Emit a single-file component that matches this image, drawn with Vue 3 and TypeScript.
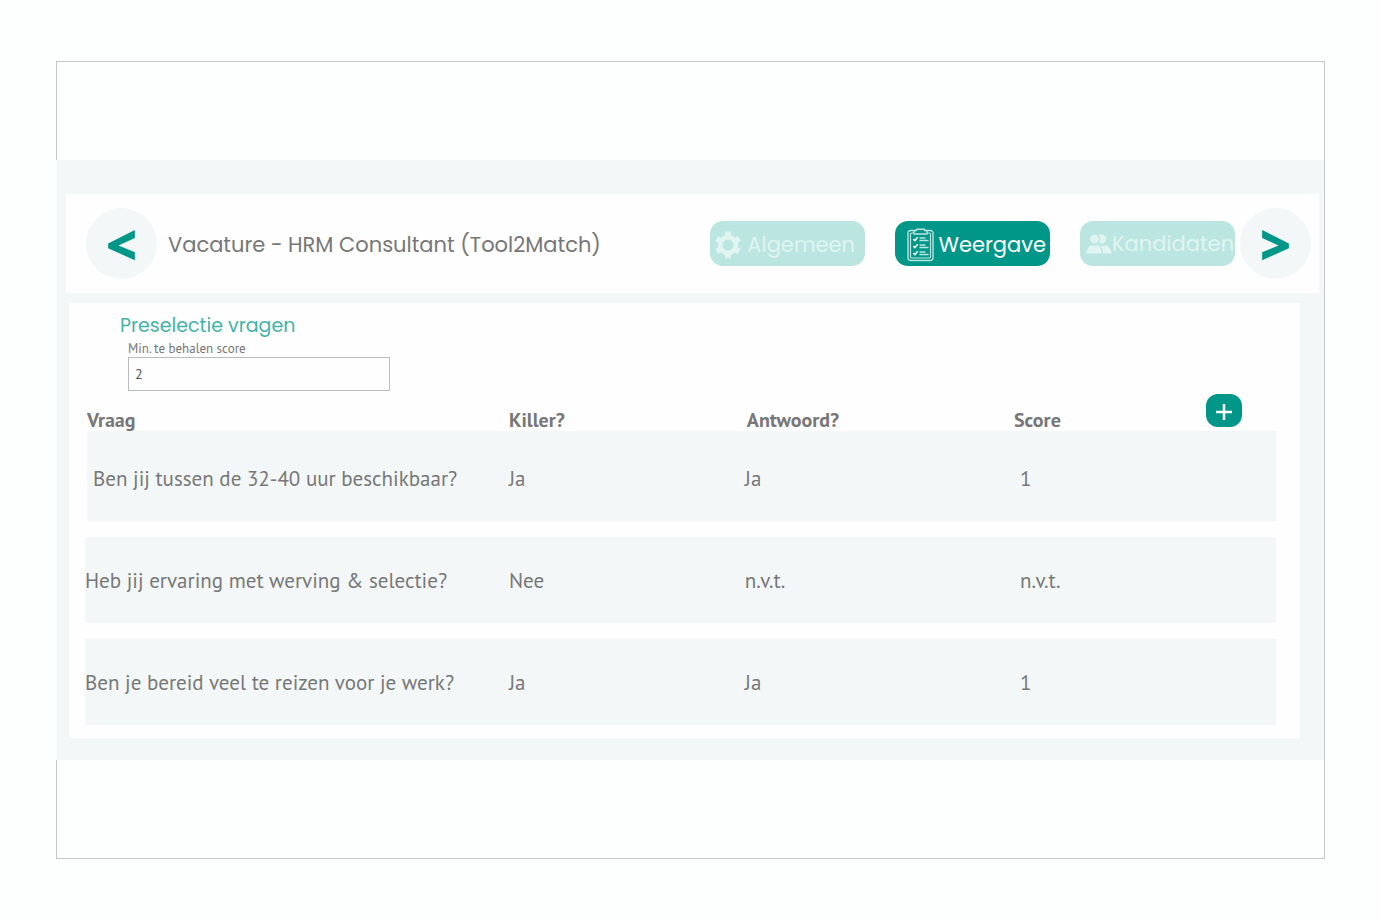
<script setup lang="ts">
import { ref } from 'vue'

type Tab = 'algemeen' | 'weergave' | 'kandidaten'

interface Question {
  text: string
  killer: string
  answer: string
  score: string
}

const activeTab = ref<Tab>('weergave')
const minScore = ref('2')

const questions = ref<Question[]>([
  { text: 'Ben jij tussen de 32-40 uur beschikbaar?', killer: 'Ja', answer: 'Ja', score: '1' },
  { text: 'Heb jij ervaring met werving & selectie?', killer: 'Nee', answer: 'n.v.t.', score: 'n.v.t.' },
  { text: 'Ben je bereid veel te reizen voor je werk?', killer: 'Ja', answer: 'Ja', score: '1' },
])
</script>

<template>
  <div class="page">
    <div class="frame">
      <main class="shell">
        <header class="bar">
          <button class="nav" type="button" aria-label="Vorige">&lt;</button>
          <h1 class="title">Vacature - HRM Consultant (Tool2Match)</h1>
          <nav class="tabs">
            <button class="tab" type="button" :class="{ active: activeTab === 'algemeen' }" @click="activeTab = 'algemeen'">
              <svg class="gear" viewBox="0 0 26 28" width="26" height="28" aria-hidden="true">
                <g fill="none" stroke="currentColor">
                  <circle cx="13" cy="14" r="7.9" stroke-width="4.8" />
                  <path d="M13 4.5V.6M13 23.5v3.900M4.800 9.300 1.700 7.500M21.200 9.300l3.100-1.800M4.800 18.700l-3.100 1.800M21.200 18.700l3.100 1.800" stroke-width="6" />
                </g>
              </svg>
              <span>Algemeen</span>
            </button>
            <button class="tab" type="button" :class="{ active: activeTab === 'weergave' }" @click="activeTab = 'weergave'">
              <svg class="clipboard" viewBox="0 0 27 34" width="27" height="34" aria-hidden="true">
                <g fill="none" stroke="#b9e4df" stroke-linecap="round" stroke-linejoin="round">
                  <path d="M7 2.500H3.500A2.500 2.500 0 0 0 1 5v25a2.500 2.500 0 0 0 2.500 2.500h20A2.500 2.500 0 0 0 26 30V5a2.500 2.500 0 0 0-2.500-2.500H20" stroke-width="1.4" />
                  <path d="M6.500 5H4.800a1.300 1.300 0 0 0-1.300 1.300v22.400A1.300 1.300 0 0 0 4.800 30h17.400a1.300 1.300 0 0 0 1.300-1.300V6.300A1.300 1.300 0 0 0 22.200 5h-1.700" stroke-width="1.2" />
                  <path d="M7 2.500h2.500V1.200h8v1.300H20V6H7z" stroke-width="1.4" />
                </g>
                <g fill="none" stroke="currentColor" stroke-linecap="round" stroke-linejoin="round">
                  <path d="m6.700 11.500 1.200 1.200 2.300-3M6.700 18.500l1.200 1.200 2.300-3M6.700 25.500l1.200 1.200 2.300-3" stroke-width="1.5" />
                  <path d="M13 10h5M13 12.500h8M13 17h5M13 19.500h8M13 24h5M13 26.500h8" stroke="#b9e4df" stroke-width="1.4" />
                </g>
              </svg>
              <span>Weergave</span>
            </button>
            <button class="tab" type="button" :class="{ active: activeTab === 'kandidaten' }" @click="activeTab = 'kandidaten'">
              <svg class="people" viewBox="0 0 26 20" width="26" height="20" aria-hidden="true">
                <g fill="currentColor">
                  <circle cx="8.5" cy="5" r="4.400" />
                  <path d="M13 1.400a4.500 4.500 0 1 1 0 7.200 6 6 0 0 0 0-7.200z" />
                  <path d="M0 19.500c.5-3 2.500-6.800 5-8.500q3.500 1.800 7 0c2.300 1.500 3.500 5 3.700 8.500z" />
                  <path d="M14 11.500q3.500 1.200 6.500-.5c2.700 1.700 4.700 5.500 5.200 8.500h-8.700c-.2-3.200-1.200-6-3-8z" />
                </g>
              </svg>
              <span>Kandidaten</span>
            </button>
          </nav>
          <button class="nav" type="button" aria-label="Volgende">&gt;</button>
        </header>

        <section class="panel">
          <h2 class="heading">Preselectie vragen</h2>
          <div class="field">
            <label for="min-score">Min. te behalen score</label>
            <input id="min-score" v-model="minScore" type="text" inputmode="numeric" />
          </div>

          <table class="questions">
            <colgroup>
              <col class="c-question" />
              <col class="c-killer" />
              <col class="c-answer" />
              <col class="c-score" />
              <col class="c-add" />
            </colgroup>
            <thead>
              <tr>
                <th scope="col">Vraag</th>
                <th scope="col">Killer?</th>
                <th scope="col">Antwoord?</th>
                <th scope="col">Score</th>
                <td>
                  <button class="add" type="button" aria-label="Vraag toevoegen">
                    <svg viewBox="0 0 16 16" width="16" height="16" aria-hidden="true">
                      <path d="M8 0v16M0 8h16" fill="none" stroke="currentColor" stroke-width="2.5" />
                    </svg>
                  </button>
                </td>
              </tr>
            </thead>
            <tbody>
              <tr v-for="question in questions" :key="question.text">
                <td>{{ question.text }}</td>
                <td>{{ question.killer }}</td>
                <td>{{ question.answer }}</td>
                <td colspan="2">{{ question.score }}</td>
              </tr>
            </tbody>
          </table>
        </section>
      </main>
    </div>
  </div>
</template>

<style>
body {
  margin: 0;
  background: #fdfefe;
}
</style>

<style scoped>
.page {
  --teal: #009688;
  --mist: #f3f7f8;
  --ink: #777;
  --display: Poppins, Inter, sans-serif;
  --text: "PT Sans", "Noto Sans", sans-serif;
  box-sizing: border-box;
  min-height: 100vh;
  padding: 61px 55px 61px 56px;
  background: #fdfefe;
  color: var(--ink);
  font-family: var(--text);
}

.page * {
  box-sizing: border-box;
}

button {
  margin: 0;
  padding: 0;
  border: 0;
  font: inherit;
  cursor: pointer;
}

.frame {
  padding: 98px 0;
  border: 1px solid #c3c7c7;
}

.shell {
  margin-left: -1px;
  padding: 34px 5px 22px 9px;
  border-left: 1px solid #fdfefe;
  background: var(--mist);
}

.bar {
  display: flex;
  align-items: center;
  min-height: 99px;
  padding: 0 8px 0 20px;
  background: #fefefe;
}

.nav {
  display: flex;
  flex: none;
  align-items: center;
  justify-content: center;
  width: 71px;
  height: 71px;
  border-radius: 50%;
  background: var(--mist);
  color: var(--teal);
  font: 800 54px/70px "Open Sans", sans-serif;
}

.title {
  flex: 1;
  margin: 0 0 0 11px;
  padding-top: 2px;
  font: 400 21px/32px var(--display);
}

.tabs {
  display: flex;
  gap: 30px;
  margin-right: 5px;
}

.tab {
  display: flex;
  align-items: center;
  justify-content: space-between;
  width: 155px;
  height: 45px;
  padding: 2px 10px 0 5px;
  border-radius: 13px;
  background: #bbe5e0;
  color: #e0f4f1;
  font: 400 21px/32px var(--display);
  white-space: nowrap;
}

.tab:nth-child(2) {
  padding: 2px 4px 0 12px;
}

.tab:nth-child(3) {
  padding: 0 2px 0 6px;
}

.tab.active {
  background: var(--teal);
  color: #fff;
}

.tab svg {
  flex: none;
}

.panel {
  margin: 10px 19px 0 3px;
  padding: 11px 24px 13px 16px;
  background: #fefefe;
}

.heading {
  margin: 0 0 2px 35px;
  color: #42b3a8;
  font: 400 19px/24px var(--display);
}

.field {
  display: flex;
  flex-direction: column;
  width: 262px;
  margin: 0 0 3px 43px;
}

.field label {
  font-size: 13px;
  line-height: 17px;
}

.field input {
  width: 100%;
  height: 34px;
  padding: 0 6px;
  border: 1px solid #b9bdbc;
  border-radius: 0;
  outline: 0;
  background: transparent;
  color: #555;
  font: 400 14px/20px var(--text);
}

.questions {
  width: 100%;
  border-spacing: 0;
  table-layout: fixed;
  font-size: 21px;
  line-height: 26px;
}

.c-question {
  width: 35.6%;
}

.c-killer {
  width: 19.8%;
}

.c-answer {
  width: 22.6%;
}

.c-add {
  width: 70px;
}

thead th {
  height: 37px;
  padding: 0;
  font-size: 20px;
  line-height: 22px;
  text-align: left;
  vertical-align: bottom;
}

thead th:first-child,
thead th:nth-child(3) {
  padding-left: 2px;
}

thead td {
  padding: 0;
  vertical-align: top;
}

.add {
  display: flex;
  align-items: center;
  justify-content: center;
  width: 36px;
  height: 33px;
  padding-top: 2px;
  border-radius: 12px;
  background: var(--teal);
  color: #fff;
}

tbody td {
  height: 102px;
  padding: 2px 0 0;
  border-bottom: 16px solid transparent;
  background: var(--mist);
  background-clip: padding-box;
  white-space: nowrap;
}

tbody td:last-child {
  padding-left: 6px;
}

tbody tr:first-child td {
  height: 106px;
  padding-top: 6px;
}

tbody tr:first-child td:first-child {
  padding-left: 6px;
  border-left: 2px solid transparent;
}

tbody tr:last-child td {
  height: 86px;
  border-bottom: 0;
}
</style>
